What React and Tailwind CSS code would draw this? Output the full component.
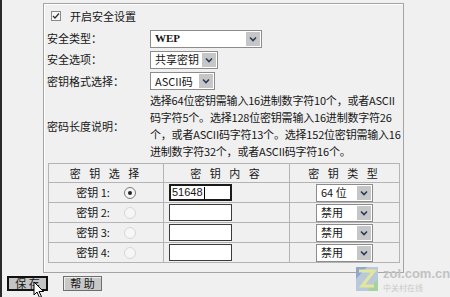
import React from "react";

function Chevron() {
  return (
    <svg width="8" height="6" viewBox="0 0 8 6">
      <path d="M1 1.5 L4 4.5 L7 1.5" fill="none" stroke="#2a3a5a" strokeWidth="1.6" />
    </svg>
  );
}

function Select({ value, width, bold }) {
  return (
    <div
      className={`h-[18px] ${width} border border-[#8c8c8c] bg-white flex items-center justify-between`}
    >
      <span
        className={`pl-[4px] leading-none ${
          bold ? "font-['Liberation_Serif',serif] font-bold text-[11px]" : ""
        }`}
      >
        {value}
      </span>
      <span className="w-[14px] h-[14px] mr-[1px] bg-[#c6c6c6] flex items-center justify-center">
        <Chevron />
      </span>
    </div>
  );
}

function Radio({ checked }) {
  return (
    <span
      className={`w-[12px] h-[12px] rounded-full border flex items-center justify-center bg-[#f6f6f6] ${
        checked ? "border-[#7a7a7a]" : "border-[#d6d6d6]"
      }`}
    >
      {checked && <span className="w-[4px] h-[4px] rounded-full bg-[#222]" />}
    </span>
  );
}

const desc = [
  "选择64位密钥需输入16进制数字符10个，或者ASCII",
  "码字符5个。选择128位密钥需输入16进制数字符26",
  "个，或者ASCII码字符13个。选择152位密钥需输入16",
  "进制数字符32个，或者ASCII码字符16个。",
];

const keys = [
  { n: 1, value: "51648", type: "64 位", checked: true },
  { n: 2, value: "", type: "禁用" },
  { n: 3, value: "", type: "禁用" },
  { n: 4, value: "", type: "禁用" },
];

export default function App() {
  return (
    <div className="relative w-[450px] h-[297px] overflow-hidden bg-[#f0f0f0] border-l-2 border-[#2a2a2a] text-[11px] text-[#161616] font-['Noto_Sans_CJK_SC','Noto_Sans',sans-serif]">
      {/* panel */}
      <div className="ml-[41px] mt-[3px] w-[361px] h-[270px] border border-[#a4a4a4] shadow-[inset_1px_1px_0_#fff]">
        {/* enable */}
        <div className="h-[24px] flex items-center pl-[7px]">
          <span className="w-[10px] h-[10px] border border-[#8a8a8a] bg-[#f8f8f8] flex items-center justify-center">
            <svg width="8" height="8" viewBox="0 0 8 8">
              <path d="M1 4 L3 6 L7 1.5" fill="none" stroke="#333" strokeWidth="1.3" />
            </svg>
          </span>
          <span className="ml-[9px]">开启安全设置</span>
        </div>

        <div className="pl-[3px]">
          <div className="h-[21px] flex items-center">
            <span className="w-[103px]">安全类型：</span>
            <Select value="WEP" width="w-[112px]" bold />
          </div>
          <div className="h-[21px] flex items-center">
            <span className="w-[103px]">安全选项：</span>
            <Select value="共享密钥" width="w-[68px]" />
          </div>
          <div className="h-[22px] flex items-center">
            <span className="w-[103px]">密钥格式选择：</span>
            <Select value="ASCII码" width="w-[65px]" />
          </div>

          {/* description */}
          <div className="h-[68px] flex items-center">
            <span className="w-[103px]">密码长度说明：</span>
            <div className="leading-[17px] whitespace-nowrap tracking-[-0.2px]">
              {desc.map((l) => (
                <div key={l}>{l}</div>
              ))}
            </div>
          </div>

          {/* keys table */}
          <table className="mt-[3px] ml-[1px] w-[351px] border-collapse border border-[#a0a0a0] table-fixed">
            <thead>
              <tr className="h-[19px]">
                <th className="w-[115px] border border-[#b4b4b4] font-normal tracking-[3px]">密 钥 选 择</th>
                <th className="w-[126px] border border-[#b4b4b4] font-normal tracking-[3px]">密 钥 内 容</th>
                <th className="w-[110px] border border-[#b4b4b4] font-normal tracking-[3px]">密 钥 类 型</th>
              </tr>
            </thead>
            <tbody>
              {keys.map((k) => (
                <tr key={k.n} className="h-[20px]">
                  <td className="border border-[#b4b4b4] p-0">
                    <div className="flex items-center justify-center gap-[14px]">
                      <span>密钥 {k.n}:</span>
                      <Radio checked={k.checked} />
                    </div>
                  </td>
                  <td className="border border-[#b4b4b4] p-0 pl-[5px]">
                    <div
                      className={`w-[63px] h-[17px] bg-white flex items-center ${
                        k.checked ? "border-2 border-[#1a1a1a]" : "border border-[#3c3c3c]"
                      }`}
                    >
                      {k.value && (
                        <span className="pl-[1px] leading-none font-['Liberation_Sans',sans-serif] text-[11px]">
                          {k.value}
                        </span>
                      )}
                      {k.value && <span className="ml-[1px] w-[1px] h-[12px] bg-black" />}
                    </div>
                  </td>
                  <td className="border border-[#b4b4b4] p-0">
                    <div className="flex justify-center">
                      <Select value={k.type} width="w-[57px]" />
                    </div>
                  </td>
                </tr>
              ))}
            </tbody>
          </table>
        </div>
      </div>

      {/* buttons */}
      <div className="mt-[3px] ml-[5px] flex items-start gap-[15px]">
        <button className="w-[41px] h-[15px] border-2 border-[#111] bg-[#c4c4c4] text-[11px] leading-none flex items-center justify-center">
          保 存
        </button>
        <button className="w-[39px] h-[15px] border border-[#6e6e6e] bg-[#c8c8c8] shadow-[inset_1px_1px_0_#eee] text-[11px] leading-none flex items-center justify-center">
          帮 助
        </button>
      </div>

      {/* mouse cursor */}
      <svg className="absolute left-[31px] top-[281px]" width="13" height="18" viewBox="0 0 13 18">
        <path d="M1 1 L1 14 L4 11 L6.5 16.5 L8.5 15.5 L6 10.5 L10.5 10.5 Z" fill="#fff" stroke="#000" strokeWidth="1" />
      </svg>

      {/* watermark */}
      <div className="absolute left-[353px] top-[265px] flex items-start">
        <svg width="25" height="28" viewBox="0 0 25 28">
          <rect x="1" y="2" width="22" height="24" fill="#b8c9dc" />
          <path d="M1 2 L12 2 L1 14 Z" fill="#8fa8cc" />
          <path d="M23 26 L12 26 L23 14 Z" fill="#a8d0a0" />
          <path d="M4 6 L19 6 L7 21 L19 21" fill="none" stroke="#e4e79a" strokeWidth="3" />
        </svg>
        <div className="ml-[3px] mt-[2px] flex flex-col">
          <span className="text-[13px] leading-[14px] font-bold text-[#c2c2c2] font-['Liberation_Sans',sans-serif]">
            zol.com.cn
          </span>
          <span className="text-[8px] leading-[10px] text-[#c8c8c8] mt-[2px]">中关村在线</span>
        </div>
      </div>
    </div>
  );
}
